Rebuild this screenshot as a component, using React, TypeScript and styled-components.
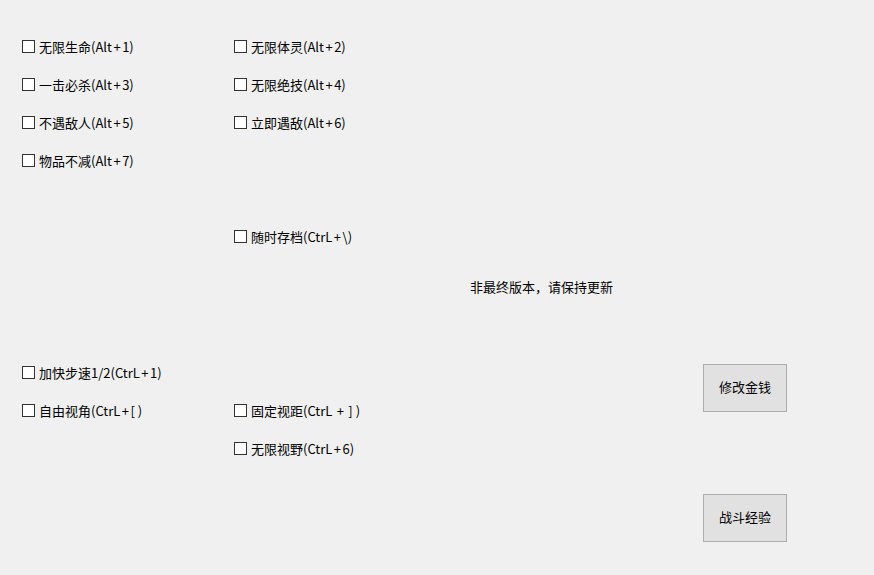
import React from "react";
import styled, { createGlobalStyle } from "styled-components";

const Global = createGlobalStyle`
  html, body { margin: 0; padding: 0; background: #f0f0f0; }
  body { font-family: "Microsoft YaHei", "Noto Sans CJK SC", "Noto Sans", sans-serif; font-size: 13px; color: #000; }
`;

const Window = styled.div`
  width: 874px;
  height: 575px;
  background: #f0f0f0;
  padding: 27px 0 0 22px;
  box-sizing: border-box;
  overflow: hidden;
`;

const Grid = styled.div`
  display: grid;
  grid-template-columns: 212px 212px;
  grid-auto-rows: 38px;
`;

const Cell = styled.label<{ $col?: number }>`
  display: flex;
  align-items: center;
  grid-column: ${(p) => p.$col ?? "auto"};
  white-space: nowrap;
`;

const Box = styled.span`
  width: 11px;
  height: 11px;
  border: 1px solid #333;
  background: #fff;
  flex: none;
  box-sizing: content-box;
`;

const Text = styled.span`
  margin-left: 4px;
  line-height: 17px;
`;

const Plus = styled.span`
  padding: 0 1.5px;
`;

const Notice = styled.div`
  margin: 22px 0 0 448px;
  line-height: 20px;
`;

const Lower = styled.div`
  display: flex;
  margin-top: 56px;
`;

const Buttons = styled.div`
  display: flex;
  flex-direction: column;
  gap: 82px;
  margin: 11px 0 0 257px;
`;

const Button = styled.button`
  width: 84px;
  height: 48px;
  box-sizing: border-box;
  background: #e1e1e1;
  border: 1px solid #adadad;
  font: inherit;
  color: #000;
  padding: 0 0 3px;
`;

const renderLabel = (label: string) => {
  const parts = label.split("+");
  return parts.map((p, i) => (
    <React.Fragment key={i}>
      {p}
      {i < parts.length - 1 && <Plus>+</Plus>}
    </React.Fragment>
  ));
};

const Check = ({ label, col }: { label: string; col?: number }) => (
  <Cell $col={col}>
    <Box />
    <Text>{renderLabel(label)}</Text>
  </Cell>
);

const Empty = styled.div``;

export default function App() {
  return (
    <>
      <Global />
      <Window>
        <Grid>
          <Check label="无限生命(Alt+1)" />
          <Check label="无限体灵(Alt+2)" />
          <Check label="一击必杀(Alt+3)" />
          <Check label="无限绝技(Alt+4)" />
          <Check label="不遇敌人(Alt+5)" />
          <Check label="立即遇敌(Alt+6)" />
          <Check label="物品不减(Alt+7)" />
          <Empty />
          <Empty />
          <Empty />
          <Empty />
          <Check label="随时存档(CtrL+\)" />
        </Grid>
        <Notice>非最终版本，请保持更新</Notice>
        <Lower>
          <Grid>
            <Check label="加快步速1/2(CtrL+1)" />
            <Empty />
            <Check label="自由视角(CtrL+[ )" />
            <Check label="固定视距(CtrL + ] )" />
            <Empty />
            <Check label="无限视野(CtrL+6)" />
          </Grid>
          <Buttons>
            <Button>修改金钱</Button>
            <Button>战斗经验</Button>
          </Buttons>
        </Lower>
      </Window>
    </>
  );
}
